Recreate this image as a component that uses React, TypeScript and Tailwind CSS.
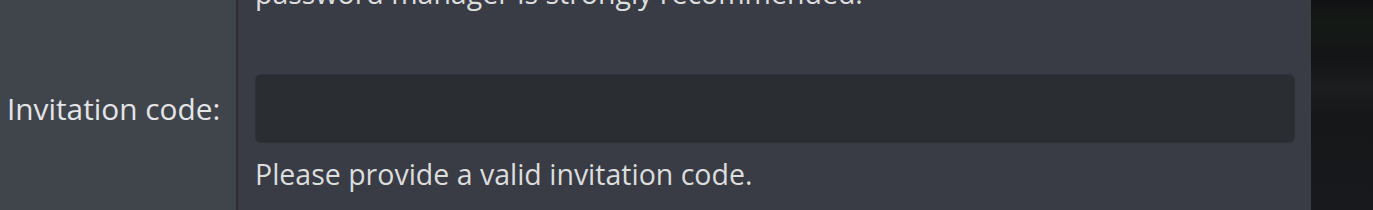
const LEFT = 'bg-[#40444b]';
const RIGHT = 'bg-[#393c44] border-l-2 border-[#2c2e33] pl-[17px] pr-4';

export default function App() {
  return (
    <div
      className="flex h-[210px] w-full overflow-hidden text-[28.5px] leading-[38px] text-[#dcddde]"
      style={{ fontFamily: '"Open Sans", "Noto Sans", sans-serif' }}
    >
      <div className="grid flex-1 grid-cols-[236px_1fr] grid-rows-[74px_69px_1fr]">
        {/* tail of previous field's help text */}
        <div className={LEFT} />
        <div className={`${RIGHT} overflow-hidden`}>
          <p className="mt-[-26px] text-[#dcddde]">
            password manager is strongly recommended.
          </p>
        </div>

        {/* invitation code row */}
        <div className={`${LEFT} flex items-center pl-[7px]`}>
          <label htmlFor="invite" className="whitespace-nowrap text-[29.8px] text-[#e3e5e8]">
            Invitation code:
          </label>
        </div>
        <div className={RIGHT}>
          <input
            id="invite"
            type="text"
            className="h-[69px] w-full rounded-[6px] border border-[#2f3237] bg-[#2a2d31] px-4 text-[28px] text-[#dcddde] outline-none"
          />
        </div>

        <div className={LEFT} />
        <div className={`${RIGHT} pt-3`}>
          <p className="text-[#dcddde]">Please provide a valid invitation code.</p>
        </div>
      </div>

      {/* blurred backdrop on the right */}
      <div className="w-[62px] shrink-0 bg-[linear-gradient(to_bottom,#111214_0%,#151a16_12%,#131416_28%,#1c1d1f_42%,#161719_55%,#18191c_100%)]" />
    </div>
  );
}
